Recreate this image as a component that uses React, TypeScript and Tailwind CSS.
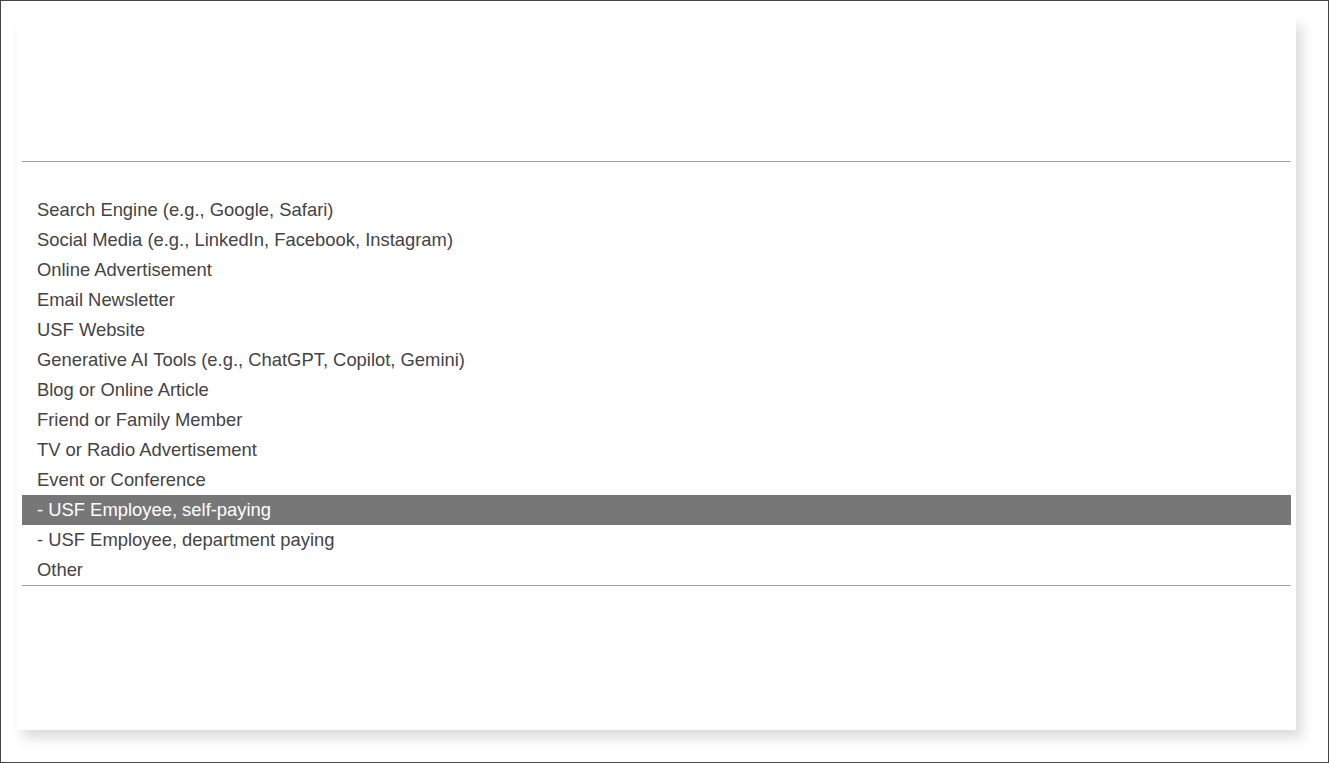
import React from 'react';

const OPTIONS = [
  'Search Engine (e.g., Google, Safari)',
  'Social Media (e.g., LinkedIn, Facebook, Instagram)',
  'Online Advertisement',
  'Email Newsletter',
  'USF Website',
  'Generative AI Tools (e.g., ChatGPT, Copilot, Gemini)',
  'Blog or Online Article',
  'Friend or Family Member',
  'TV or Radio Advertisement',
  'Event or Conference',
  '- USF Employee, self-paying',
  '- USF Employee, department paying',
  'Other',
];

export default function App() {
  const selected = 10;

  return (
    <div className="w-[1329px] h-[763px] border border-[#444] bg-white pt-4 pl-4 overflow-hidden font-['Liberation_Sans',Arial,sans-serif]">
      {/* Card */}
      <div className="w-[1279px] h-[713px] bg-white shadow-[6px_8px_12px_rgba(0,0,0,0.14)] px-[5px] pt-[144px]">
        <div className="border-t border-[#a0a0a0]" />
        <ul className="pt-[33px]">
          {OPTIONS.map((opt, i) => (
            <li
              key={opt}
              className={
                'h-[30px] flex items-center pl-[15px] text-[18.4px] ' +
                (i === selected ? 'bg-[#777777] text-white' : 'text-[#444444]')
              }
            >
              {opt}
            </li>
          ))}
        </ul>
        <div className="border-t border-[#a0a0a0]" />
      </div>
    </div>
  );
}
